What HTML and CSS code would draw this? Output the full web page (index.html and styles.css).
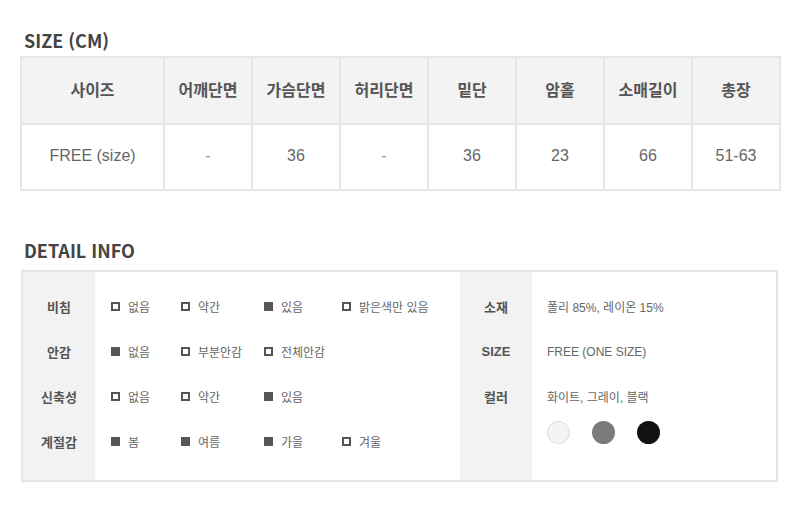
FILE: index.html
```html
<!DOCTYPE html>
<html lang="ko">
<head>
<meta charset="utf-8">
<link rel="stylesheet" href="styles.css">
</head>
<body>
<div class="page">
  <h2 class="title title-size">SIZE (CM)</h2>
  <table class="size-table">
    <thead>
      <tr>
        <th class="c-first">사이즈</th><th>어깨단면</th><th>가슴단면</th><th>허리단면</th><th>밑단</th><th>암홀</th><th>소매길이</th><th>총장</th>
      </tr>
    </thead>
    <tbody>
      <tr>
        <td>FREE (size)</td><td class="dash">-</td><td>36</td><td class="dash">-</td><td>36</td><td>23</td><td>66</td><td>51-63</td>
      </tr>
    </tbody>
  </table>

  <h2 class="title title-detail">DETAIL INFO</h2>
  <div class="detail">
    <div class="half left">
      <div class="labels">
        <div class="lab">비침</div>
        <div class="lab">안감</div>
        <div class="lab">신축성</div>
        <div class="lab">계절감</div>
      </div>
      <div class="opts">
        <div class="orow">
          <span class="opt w1"><i class="box"></i>없음</span>
          <span class="opt w2"><i class="box"></i>약간</span>
          <span class="opt w3"><i class="box on"></i>있음</span>
          <span class="opt"><i class="box"></i>밝은색만 있음</span>
        </div>
        <div class="orow">
          <span class="opt w1"><i class="box on"></i>없음</span>
          <span class="opt w2"><i class="box"></i>부분안감</span>
          <span class="opt w3"><i class="box"></i>전체안감</span>
        </div>
        <div class="orow">
          <span class="opt w1"><i class="box"></i>없음</span>
          <span class="opt w2"><i class="box"></i>약간</span>
          <span class="opt w3"><i class="box on"></i>있음</span>
        </div>
        <div class="orow">
          <span class="opt w1"><i class="box on"></i>봄</span>
          <span class="opt w2"><i class="box on"></i>여름</span>
          <span class="opt w3"><i class="box on"></i>가을</span>
          <span class="opt"><i class="box"></i>겨울</span>
        </div>
      </div>
    </div>
    <div class="half right">
      <div class="labels">
        <div class="lab">소재</div>
        <div class="lab en">SIZE</div>
        <div class="lab">컬러</div>
      </div>
      <div class="vals">
        <div class="orow">폴리 85%, 레이온 15%</div>
        <div class="orow">FREE (ONE SIZE)</div>
        <div class="orow">화이트, 그레이, 블랙</div>
        <div class="swatches">
          <span class="sw white"></span>
          <span class="sw gray"></span>
          <span class="sw black"></span>
        </div>
      </div>
    </div>
  </div>
</div>
</body>
</html>
```

FILE: styles.css
```css
* { box-sizing: border-box; }
html, body { margin: 0; padding: 0; background: #fff; }
body {
  font-family: "Noto Sans CJK KR", "Noto Sans", "Liberation Sans", sans-serif;
  color: #555;
}
.page { padding: 0 0 0 20px; width: 800px; }

.title {
  margin: 0;
  font-family: "Noto Sans CJK KR", sans-serif;
  font-size: 18px;
  font-weight: 700;
  color: #444;
  padding-left: 4px;
  line-height: 20px;
}
.title-size { padding-top: 30px; height: 56px; }
.title-detail { height: 30px; margin-top: 49px; }

.size-table {
  border-collapse: collapse;
  width: 761px;
  table-layout: fixed;
}
.size-table th, .size-table td {
  border: 2px solid #e6e6e6;
  text-align: center;
  width: 88px;
  padding: 0;
}
.size-table th.c-first { width: 143px; }
.size-table th {
  background: #f3f3f3;
  height: 67px;
  font-size: 16px;
  font-weight: 700;
  color: #555;
  padding-bottom: 4px;
}
.size-table td {
  height: 66px;
  font-family: "Liberation Sans", "Noto Sans CJK KR", sans-serif;
  font-size: 16px;
  color: #666;
  padding-bottom: 2px;
}
.size-table td.dash { color: #999; }

.detail {
  display: flex;
  width: 757px;
  height: 212px;
  margin-left: 1px;
  border: 2px solid #e6e6e6;
}
.half { display: flex; }
.left { width: 437px; }
.right { flex: 1; }
.labels {
  width: 72px;
  background: #f2f2f2;
  padding-top: 12px;
}
.lab {
  height: 45px;
  line-height: 45px;
  text-align: center;
  font-size: 13px;
  font-weight: 700;
  color: #555;
}
.lab.en { font-family: "Liberation Sans", sans-serif; }
.opts, .vals { flex: 1; padding-top: 12px; padding-left: 16px; }
.vals { padding-left: 15px; }
.orow {
  height: 45px;
  display: flex;
  align-items: center;
  font-size: 12px;
  color: #666;
}
.vals .orow { font-family: "Liberation Sans", "Noto Sans CJK KR", sans-serif; }
.opt { display: inline-flex; align-items: center; white-space: nowrap; }
.opt.w1 { width: 70px; }
.opt.w2 { width: 83px; }
.opt.w3 { width: 78px; }
.box {
  display: inline-block;
  width: 9px;
  height: 9px;
  border: 2px solid #555;
  margin-right: 8px;
  background: #fff;
}
.box.on { background: #5a5555; border-color: #5a5555; }

.swatches { display: flex; gap: 22px; margin-top: 2px; }
.sw {
  width: 23px;
  height: 23px;
  border-radius: 50%;
  display: inline-block;
}
.sw.white { background: #f4f4f4; border: 1px solid #dcdcdc; }
.sw.gray { background: #7b7b7b; }
.sw.black { background: #111; }
```
